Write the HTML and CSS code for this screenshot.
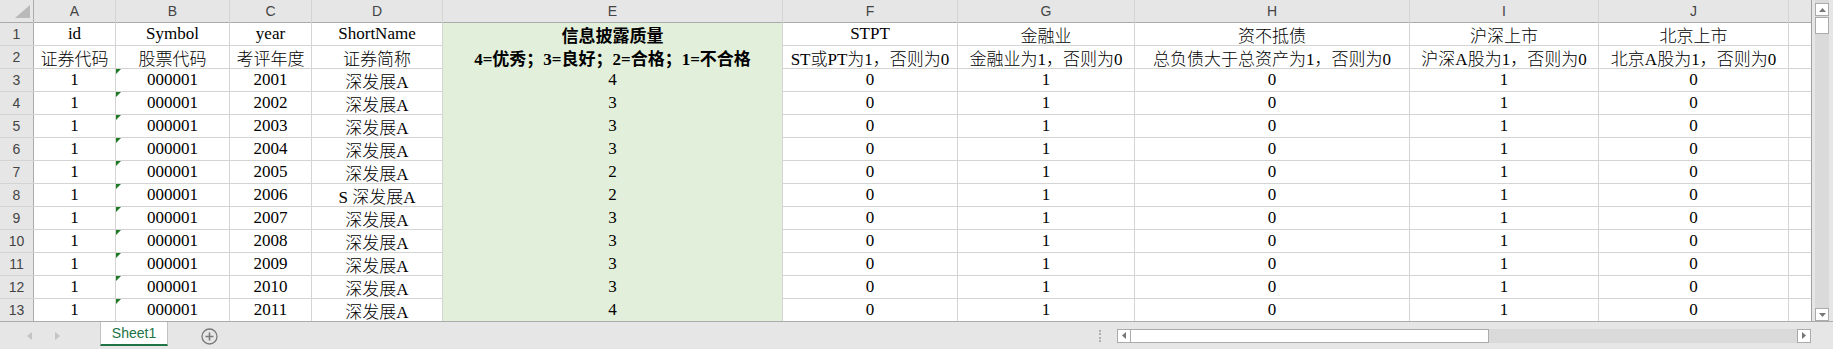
FILE: index.html
```html
<!DOCTYPE html>
<html>
<head>
  <meta charset="utf-8" />
  <title>Sheet1</title>
  <link rel="stylesheet" href="styles.css">
</head>
<body>
  <div class="sheet">
    <div class="grid" id="grid">
      <div class="corner">
        <svg width="15" height="13" viewBox="0 0 15 13"><polygon points="15,0 15,13 0,13" fill="#b9b9b9" /></svg>
      </div>
      <div class="ch">A</div>
      <div class="ch">B</div>
      <div class="ch">C</div>
      <div class="ch">D</div>
      <div class="ch">E</div>
      <div class="ch">F</div>
      <div class="ch">G</div>
      <div class="ch">H</div>
      <div class="ch">I</div>
      <div class="ch">J</div>
      <div class="ch"></div>

      <div class="rn">1</div>
      <div class="c">id</div>
      <div class="c">Symbol</div>
      <div class="c">year</div>
      <div class="c">ShortName</div>
      <div class="c e b">信息披露质量</div>
      <div class="c">STPT</div>
      <div class="c">金融业</div>
      <div class="c">资不抵债</div>
      <div class="c">沪深上市</div>
      <div class="c">北京上市</div>
      <div class="c"></div>

      <div class="rn">2</div>
      <div class="c">证券代码</div>
      <div class="c">股票代码</div>
      <div class="c">考评年度</div>
      <div class="c">证券简称</div>
      <div class="c e b">4=优秀；3=良好；2=合格；1=不合格</div>
      <div class="c">ST或PT为1，否则为0</div>
      <div class="c">金融业为1，否则为0</div>
      <div class="c">总负债大于总资产为1，否则为0</div>
      <div class="c">沪深A股为1，否则为0</div>
      <div class="c">北京A股为1，否则为0</div>
      <div class="c"></div>
    </div>
    <div class="vscroll">
      <div class="vbtn">
        <svg width="7" height="4" viewBox="0 0 7 4"><polygon points="3.5,0 7,4 0,4" fill="#777" /></svg>
      </div>
      <div class="vthumb"></div>
      <div class="vtrack"></div>
      <div class="vbtn">
        <svg width="7" height="4" viewBox="0 0 7 4"><polygon points="0,0 7,0 3.5,4" fill="#777" /></svg>
      </div>
    </div>
  </div>

  <div class="tabbar">
    <div class="nav">
      <svg width="5" height="8" viewBox="0 0 5 8"><polygon points="5,0 5,8 0,4" fill="#c4c4c4" /></svg>
      <svg width="5" height="8" viewBox="0 0 5 8"><polygon points="0,0 5,4 0,8" fill="#c4c4c4" /></svg>
    </div>
    <div class="tab">Sheet1</div>
    <div class="addsheet">
      <svg width="17" height="17" viewBox="0 0 17 17">
        <circle cx="8.5" cy="8.5" r="7.5" fill="none" stroke="#7a7a7a" stroke-width="1.3" />
        <path d="M8.5 4.5v8M4.5 8.5h8" stroke="#7a7a7a" stroke-width="1.6" />
      </svg>
    </div>
    <div class="spacer"></div>
    <div class="dots"></div>
    <div class="hscroll">
      <div class="hbtn">
        <svg width="4" height="7" viewBox="0 0 4 7"><polygon points="4,0 4,7 0,3.5" fill="#777" /></svg>
      </div>
      <div class="hthumb"></div>
      <div class="htrack"></div>
      <div class="hbtn">
        <svg width="4" height="7" viewBox="0 0 4 7"><polygon points="0,0 4,3.5 0,7" fill="#777" /></svg>
      </div>
    </div>
  </div>

  <script>
    // rânduri 3-13
    const calitate = [4, 3, 3, 3, 2, 2, 3, 3, 3, 3, 4];
    let html = "";
    for (let i = 0; i < calitate.length; i++) {
      const nume = i === 5 ? "S 深发展A" : "深发展A";
      html +=
        '<div class="rn">' + (i + 3) + '</div>' +
        '<div class="c">1</div>' +
        '<div class="c txt">000001</div>' +
        '<div class="c">' + (2001 + i) + '</div>' +
        '<div class="c">' + nume + '</div>' +
        '<div class="c e">' + calitate[i] + '</div>' +
        '<div class="c">0</div>' +
        '<div class="c">1</div>' +
        '<div class="c">0</div>' +
        '<div class="c">1</div>' +
        '<div class="c">0</div>' +
        '<div class="c"></div>';
    }
    document.getElementById("grid").insertAdjacentHTML("beforeend", html);
  </script>
</body>
</html>
```

FILE: styles.css
```css
body {
  margin: 0;
  background: #e6e6e6;
  overflow: hidden;
}
.sheet {
  display: flex;
  height: 321px;
}
.grid {
  display: grid;
  grid-template-columns: 33px 81px 113px 81px 130px 339px 174px 176px 274px 188px 189px 22px;
  grid-template-rows: 22px;
  grid-auto-rows: 22px;
  gap: 1px;
  background: #d4d4d4;
  border-right: 1px solid #a0a0a0;
  height: 321px;
  overflow: hidden;
}
.corner {
  background: #e6e6e6;
  display: flex;
  justify-content: flex-end;
  align-items: flex-end;
  padding: 0 3px 4px 0;
  box-shadow: 0 1px 0 #ababab, 1px 0 0 #ababab;
}
.ch, .rn {
  background: #e6e6e6;
  color: #444;
  font-family: "Liberation Sans", Arial, sans-serif;
  font-size: 14px;
  display: flex;
  align-items: center;
  justify-content: center;
}
.ch {
  box-shadow: 0 1px 0 #ababab;
}
.rn {
  box-shadow: 1px 0 0 #ababab;
}
.c {
  background: #fff;
  color: #000;
  font-family: "Liberation Serif", "Noto Sans CJK SC", serif;
  font-size: 17px;
  font-weight: 300;
  display: flex;
  align-items: center;
  justify-content: center;
  white-space: nowrap;
  position: relative;
}
.c.e {
  background: #e2efda;
  box-shadow: 0 1px 0 #e2efda;
}
.c.b {
  font-weight: bold;
}
.txt::before {
  content: "";
  position: absolute;
  top: 0;
  left: 0;
  border-top: 5px solid #1e7b25;
  border-right: 5px solid transparent;
}
.vscroll {
  width: 21px;
  background: #e6e6e6;
  display: flex;
  flex-direction: column;
  padding: 3px 4px 0 3px;
  box-sizing: border-box;
  background-image: linear-gradient(#dadada, #dadada);
  background-size: 14px 100%;
  background-position: 3px 0;
  background-repeat: no-repeat;
}
.vbtn {
  height: 13px;
  background: #fff;
  border: 1px solid #ababab;
  box-sizing: border-box;
  display: flex;
  align-items: center;
  justify-content: center;
}
.vthumb {
  height: 17px;
  margin-top: 1px;
  background: #fff;
  border: 1px solid #ababab;
  box-sizing: border-box;
}
.vtrack {
  flex: 1;
}
.tabbar {
  height: 28px;
  border-top: 1px solid #ababab;
  box-sizing: border-box;
  display: flex;
  align-items: center;
}
.nav {
  display: flex;
  gap: 23px;
  margin-left: 27px;
  width: 73px;
}
.tab {
  align-self: flex-start;
  width: 68px;
  height: 24px;
  box-sizing: border-box;
  background: #fff;
  border-left: 1px solid #c2c2c2;
  border-right: 1px solid #c2c2c2;
  border-bottom: 2px solid #217346;
  color: #217346;
  font-family: "Liberation Sans", Arial, sans-serif;
  font-size: 14px;
  display: flex;
  align-items: center;
  justify-content: center;
}
.addsheet {
  margin-left: 33px;
  display: flex;
  margin-top: 1px;
}
.spacer {
  flex: 1;
}
.dots {
  width: 2px;
  height: 12px;
  border-left: 2px dotted #b0b0b0;
  margin-right: 14px;
}
.hscroll {
  width: 694px;
  height: 14px;
  margin-right: 22px;
  display: flex;
  background: #dadada;
}
.hbtn {
  width: 14px;
  background: #fff;
  border: 1px solid #ababab;
  box-sizing: border-box;
  display: flex;
  align-items: center;
  justify-content: center;
}
.hthumb {
  width: 358px;
  background: #fff;
  border: 1px solid #ababab;
  border-left: none;
  box-sizing: border-box;
}
.htrack {
  flex: 1;
}
```
